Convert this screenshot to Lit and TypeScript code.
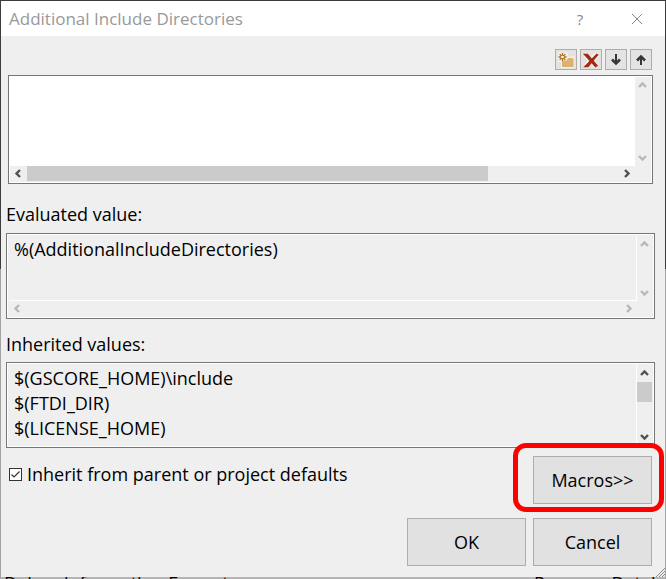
import { LitElement, html, css, svg, nothing } from "lit";
import { customElement, property } from "lit/decorators.js";

const chevrons = {
  up: "M4 9 L7.5 5.5 L11 9",
  down: "M4 6 L7.5 9.5 L11 6",
  left: "M9 4 L5.5 7.5 L9 11",
  right: "M6 4 L9.5 7.5 L6 11",
};

@customElement("scroll-bar")
class ScrollBar extends LitElement {
  @property({ type: Boolean, reflect: true }) horizontal = false;
  @property({ type: Boolean, reflect: true }) active = false;
  /** Thumb length as a percentage of the track; 0 draws no thumb. */
  @property({ type: Number }) thumb = 0;

  static styles = css`
    :host {
      display: flex;
      flex-direction: column;
      width: 15px;
      background: #efefef;
      color: #b8b8b8;
    }
    :host([horizontal]) {
      flex-direction: row;
      width: auto;
      height: 15px;
    }
    :host([active]) {
      color: #505050;
    }
    svg {
      display: block;
      flex: none;
      width: 15px;
      height: 17px;
      fill: none;
      stroke: currentColor;
      stroke-width: 2.4;
    }
    :host([horizontal]) svg {
      width: 17px;
      height: 15px;
    }
    .track {
      display: flex;
      flex: 1;
      flex-direction: inherit;
      min-height: 0;
    }
    .thumb {
      background: #cbcbcb;
    }
  `;

  private arrow(d: string) {
    return html`<svg viewBox="0 0 15 15" aria-hidden="true">${svg`<path d=${d} />`}</svg>`;
  }

  render() {
    return html`
      ${this.arrow(this.horizontal ? chevrons.left : chevrons.up)}
      <div class="track">
        ${this.thumb
          ? html`<div class="thumb" style="flex-basis:${this.thumb}%"></div>`
          : nothing}
      </div>
      ${this.arrow(this.horizontal ? chevrons.right : chevrons.down)}
    `;
  }
}

@customElement("app-root")
class AppRoot extends LitElement {
  static styles = css`
    :host {
      display: flex;
      flex-direction: column;
      box-sizing: border-box;
      min-height: 100vh;
      padding: 1px 1px 0;
      background: linear-gradient(#3c3b3e 269px, #a3a3a3 269px);
      font-family: "Open Sans", "Noto Sans", sans-serif;
      font-size: 18px;
      line-height: 25px;
      color: #000;
    }
    * {
      box-sizing: border-box;
    }
    .window {
      display: flex;
      flex: 1;
      flex-direction: column;
      position: relative;
      background: #efefef;
    }
    .title-bar {
      display: flex;
      align-items: center;
      height: 35px;
      padding: 0 8px;
      background: #fff;
      color: #999;
    }
    h1 {
      flex: 1;
      margin: 0;
      font-size: 17px;
      font-weight: 400;
    }
    .caption {
      display: grid;
      place-items: center;
      width: 40px;
      height: 24px;
      margin-left: 17px;
      padding: 0;
      border: 0;
      background: none;
      color: #888;
      font: 15px "Open Sans", sans-serif;
    }
    .toolbar {
      display: flex;
      justify-content: flex-end;
      gap: 3px;
      padding: 13px 13px 5px;
    }
    .tool {
      width: 22px;
      height: 21px;
      padding: 0;
      border: 1px solid #adadad;
      background: #e3e3e3;
    }
    .tool svg {
      display: block;
      width: 20px;
      height: 19px;
    }
    .box {
      display: grid;
      grid-template-columns: 1fr 15px;
      grid-template-rows: 1fr 15px;
      height: 86px;
      margin: 0 10px 0 5px;
      padding: 2px;
      border: 1px solid #767676;
      background: #efefef;
      box-shadow: inset 0 0 0 1px #fff;
    }
    .box.editor {
      height: 109px;
      margin: 0 12px 0 7px;
      padding: 1px 2px 2px 1px;
    }
    .box.list {
      grid-template-rows: 1fr;
    }
    textarea {
      display: block;
      width: 100%;
      height: 100%;
      min-height: 0;
      margin: 0;
      padding: 1px 5px;
      border: 0;
      border-right: 1px solid #fff;
      border-bottom: 1px solid #fff;
      outline: 0;
      resize: none;
      overflow: hidden;
      white-space: pre;
      background: transparent;
      color: inherit;
      font: inherit;
    }
    .list textarea {
      border-bottom: 0;
    }
    .editor textarea {
      background: #fff;
    }
    .caption-label {
      display: block;
      padding: 18px 5px 6px;
    }
    .caption-label.near {
      padding: 13px 5px 5px;
    }
    .footer {
      display: grid;
      grid-template-columns: 1fr 119px 119px;
      gap: 14px 7px;
      padding: 8px 13px 11px 8px;
    }
    .check {
      grid-column: 1 / 3;
      align-self: start;
      display: flex;
      align-items: center;
      gap: 5px;
      padding-top: 6px;
    }
    .check input {
      appearance: none;
      flex: none;
      width: 13px;
      height: 13px;
      margin: 0;
      border: 1px solid #333;
      background: #fff;
    }
    .check .mark {
      display: none;
      position: absolute;
      width: 13px;
      height: 13px;
      pointer-events: none;
    }
    .check input:checked + .mark {
      display: block;
    }
    .push {
      width: 100%;
      height: 48px;
      padding: 0;
      border: 1px solid #adadad;
      background: #e1e1e1;
      color: inherit;
      font: inherit;
    }
    .ok {
      grid-column: 2;
    }
    .macros {
      position: relative;
    }
    .highlight {
      position: absolute;
      inset: -13px -12px -8px -20px;
      border: 5px solid #fe0000;
      border-radius: 13px;
      pointer-events: none;
    }
    .grip {
      position: absolute;
      right: 0;
      bottom: 0;
      width: 9px;
      height: 9px;
    }
    .behind {
      display: flex;
      justify-content: space-between;
      height: 2px;
      overflow: hidden;
      padding: 0 3px;
      background: #b4b4b4;
      line-height: 12px;
    }
  `;

  render() {
    return html`
      <main class="window">
        <header class="title-bar">
          <h1>Additional Include Directories</h1>
          <button class="caption" aria-label="Help">?</button>
          <button class="caption" aria-label="Close">
            <svg width="12" height="12" viewBox="0 0 12 12" fill="none" stroke="#888">
              <path d="M1 1 L11 11 M11 1 L1 11" />
            </svg>
          </button>
        </header>

        <div class="toolbar" role="toolbar">
          <button class="tool" aria-label="New line">
            <svg viewBox="0 0 20 19">
              <path d="M2 2.500H12V6.500H18.500V18H5V12H2Z" fill="#f3f0e9" />
              <path d="M6 10.500H10.500L12 8H16.500L17.500 9V17H6Z" fill="#dcb271" />
              <path
                d="M6.500 3V11M2.500 7H10.500M3.700 4.200L9.300 9.800M9.300 4.200L3.700 9.800"
                stroke="#b0701a"
                stroke-width="1.300"
              />
              <circle cx="6.500" cy="7" r="1.300" fill="#fff" />
            </svg>
          </button>
          <button class="tool" aria-label="Delete">
            <svg viewBox="0 0 20 19" fill="none">
              <path d="M4.500 5L15 16M16 4.500L5 16" stroke="#f7f4f2" stroke-width="5" />
              <path d="M3.500 4.500L6.500 4.500L16 15.500L14.500 16.500Z" fill="#a52a12" stroke="#a52a12" stroke-width="1.400" />
              <path d="M15.500 4.500L16.500 5L7 16.500L4 16.500Z" fill="#a52a12" stroke="#a52a12" stroke-width="1.400" />
            </svg>
          </button>
          <button class="tool" aria-label="Move down">
            <svg viewBox="0 0 20 19" fill="none" stroke="#363636">
              <path d="M10 4V13" stroke-width="2" />
              <path d="M6 9.500L10 13.500L14 9.500" stroke-width="2.600" />
            </svg>
          </button>
          <button class="tool" aria-label="Move up">
            <svg viewBox="0 0 20 19" fill="none" stroke="#363636">
              <path d="M10 15V6" stroke-width="2" />
              <path d="M6 10.500L10 6.500L14 10.500" stroke-width="2.600" />
            </svg>
          </button>
        </div>

        <div class="box editor">
          <textarea aria-label="Additional include directories"></textarea>
          <scroll-bar></scroll-bar>
          <scroll-bar horizontal active .thumb=${78}></scroll-bar>
        </div>

        <label class="caption-label" for="evaluated">Evaluated value:</label>
        <div class="box">
          <textarea id="evaluated" readonly .value=${"%(AdditionalIncludeDirectories)"}></textarea>
          <scroll-bar></scroll-bar>
          <scroll-bar horizontal></scroll-bar>
        </div>

        <label class="caption-label near" for="inherited">Inherited values:</label>
        <div class="box list">
          <textarea
            id="inherited"
            readonly
            .value=${"$(GSCORE_HOME)\\include\n$(FTDI_DIR)\n$(LICENSE_HOME)"}
          ></textarea>
          <scroll-bar active .thumb=${44}></scroll-bar>
        </div>

        <div class="footer">
          <label class="check">
            <input type="checkbox" checked />
            <svg class="mark" viewBox="0 0 13 13" fill="none" stroke="#333" stroke-width="1.200">
              <path d="M2.500 6.500L5 9L10.500 3.500" />
            </svg>
            <span>Inherit from parent or project defaults</span>
          </label>
          <div class="macros">
            <button class="push">Macros&gt;&gt;</button>
            <div class="highlight"></div>
          </div>
          <button class="push ok">OK</button>
          <button class="push">Cancel</button>
        </div>
        <svg class="grip" viewBox="0 0 9 9" stroke="#8c8c8c" aria-hidden="true">
          <path d="M0 9L9 0M3 9L9 3M6 9L9 6" />
        </svg>
      </main>
      <div class="behind" aria-hidden="true">
        <span>Debug Information Format</span>
        <span>Program Datab</span>
      </div>
    `;
  }
}
